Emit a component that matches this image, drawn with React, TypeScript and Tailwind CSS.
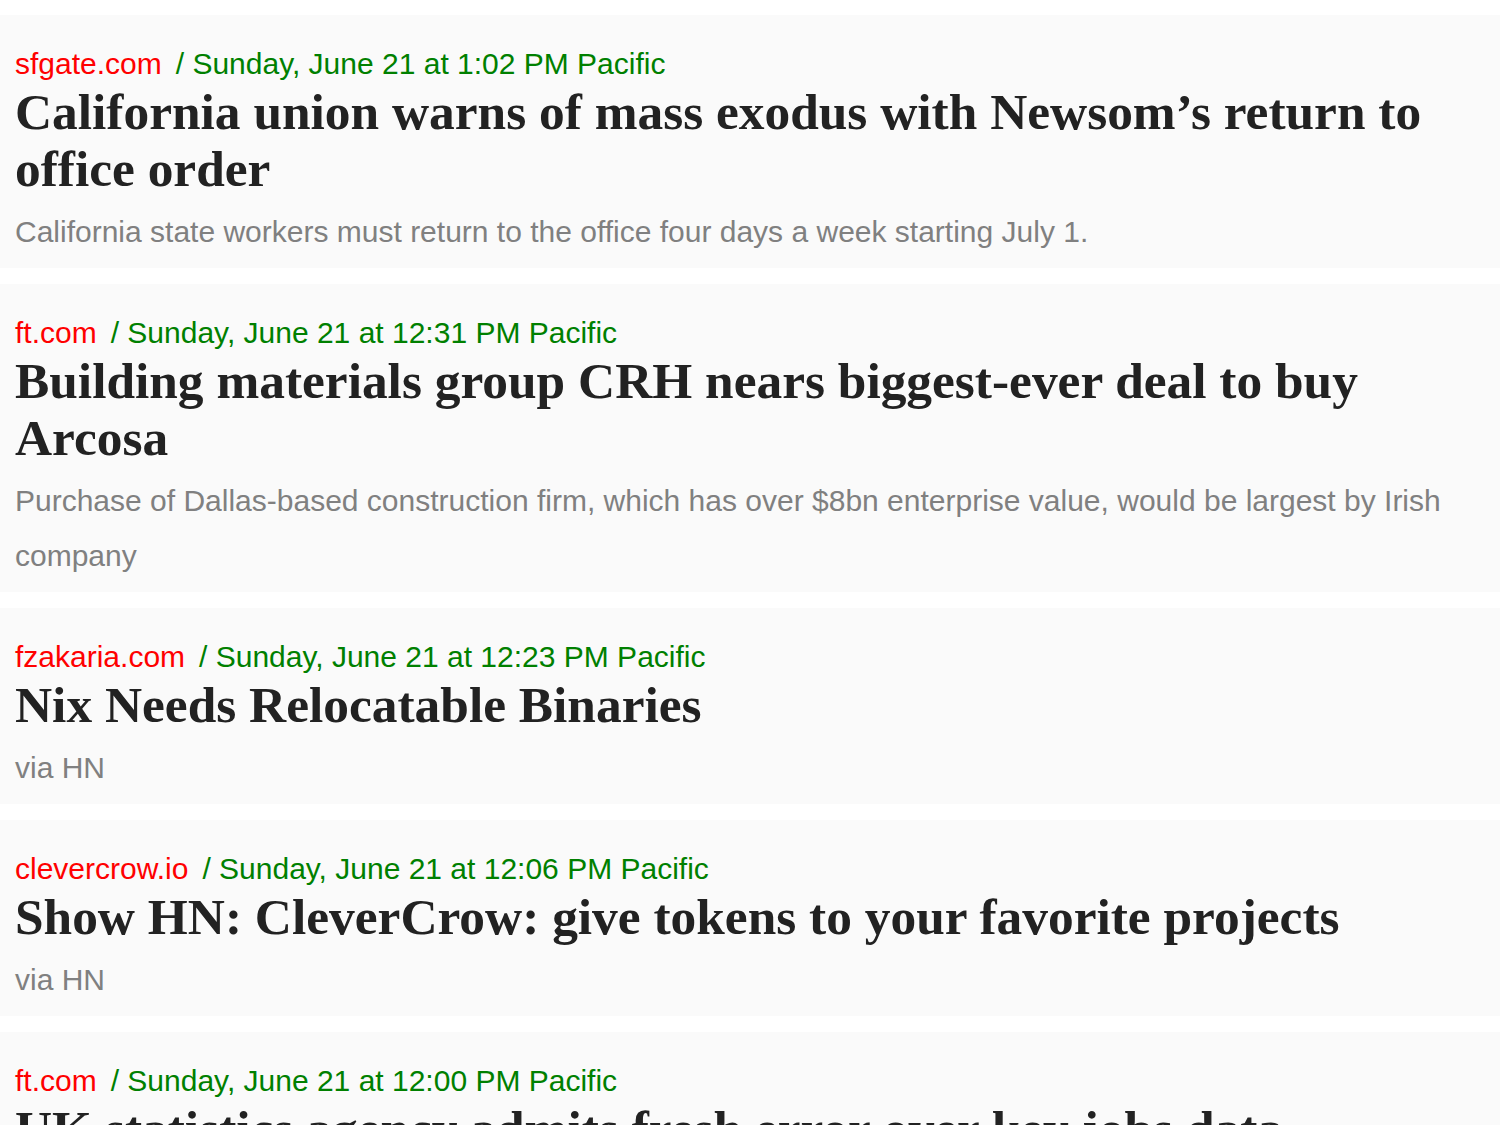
import React from 'react';

interface Story {
  site: string;
  time: string;
  title: string;
  desc: string;
}

const STORIES: Story[] = [
  {
    site: 'sfgate.com',
    time: 'Sunday, June 21 at 1:02 PM Pacific',
    title: 'California union warns of mass exodus with Newsom\u2019s return to office order',
    desc: 'California state workers must return to the office four days a week starting July 1.',
  },
  {
    site: 'ft.com',
    time: 'Sunday, June 21 at 12:31 PM Pacific',
    title: 'Building materials group CRH nears biggest-ever deal to buy Arcosa',
    desc: 'Purchase of Dallas-based construction firm, which has over $8bn enterprise value, would be largest by Irish company',
  },
  {
    site: 'fzakaria.com',
    time: 'Sunday, June 21 at 12:23 PM Pacific',
    title: 'Nix Needs Relocatable Binaries',
    desc: 'via HN',
  },
  {
    site: 'clevercrow.io',
    time: 'Sunday, June 21 at 12:06 PM Pacific',
    title: 'Show HN: CleverCrow: give tokens to your favorite projects',
    desc: 'via HN',
  },
  {
    site: 'ft.com',
    time: 'Sunday, June 21 at 12:00 PM Pacific',
    title: 'UK statistics agency admits fresh error over key jobs data',
    desc: 'Office for National Statistics says labour market figures were understated',
  },
];

const StoryCard = ({ story }: { story: Story }) => (
  <div className="bg-[#fafafa] pl-[15px] pr-[15px] pt-[31px] pb-[9px]">
    <div className="text-[30px] leading-[35px] font-['Liberation_Sans',Arial,sans-serif] whitespace-nowrap">
      <span className="text-[#ff0000]">{story.site}</span>
      <span className="ml-[14px] text-[#008000]">/ {story.time}</span>
    </div>
    <h2 className="mt-[2px] text-[51.4px] leading-[57px] font-bold text-[#222222] font-['Liberation_Serif','Times_New_Roman',serif]">
      {story.title}
    </h2>
    <p className="mt-[7px] text-[30px] leading-[55px] text-[#808080] font-['Liberation_Sans',Arial,sans-serif]">
      {story.desc}
    </p>
  </div>
);

export default function App() {
  return (
    <div className="min-h-screen bg-white pt-[15px] flex flex-col gap-4 overflow-hidden">
      {STORIES.map((s, i) => (
        <StoryCard key={i} story={s} />
      ))}
    </div>
  );
}
